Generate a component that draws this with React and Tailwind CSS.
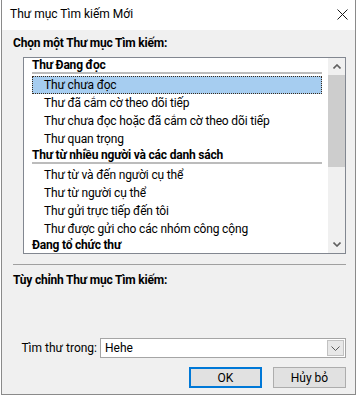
import React from 'react';

const font = { fontFamily: 'Roboto, "Noto Sans", sans-serif' };

function Header({ children }) {
  return (
    <div className="h-[18px] flex flex-col">
      <span className="h-[14px] leading-[14px] font-bold tracking-[-0.2px] text-black whitespace-nowrap">{children}</span>
      <div className="h-[2px] bg-[#bcbcbc]" />
    </div>
  );
}

function Item({ children, selected }) {
  return (
    <div
      className={
        'h-[18px] pl-[11px] leading-[16px] tracking-[-0.15px] whitespace-nowrap text-black ' +
        (selected ? 'bg-[#a6cdf0] border border-dotted border-[#3b2b1b]' : 'border border-transparent')
      }
    >
      {children}
    </div>
  );
}

function ScrollArrow({ up }) {
  return (
    <div className="h-[17px] flex items-center justify-center">
      <svg width="8" height="5" viewBox="0 0 8 5">
        <path
          d={up ? 'M0.5 4.5 L4 1 L7.5 4.5' : 'M0.5 0.5 L4 4 L7.5 0.5'}
          fill="none"
          stroke="#606060"
          strokeWidth="1.6"
        />
      </svg>
    </div>
  );
}

export default function App() {
  return (
    <div className="w-[358px] h-[396px] bg-white overflow-hidden text-[12px] text-black" style={font}>
      <div className="ml-px w-[355px] h-[395px] border-l border-r border-b border-[#8a8a8a] flex flex-col">
        {/* title bar */}
        <div className="h-[30px] bg-white flex items-center justify-between pl-[8px] pr-[7px] pb-[2px]">
          <span className="leading-4">Thư mục Tìm kiếm Mới</span>
          <svg width="11" height="11" viewBox="0 0 11 11" className="mt-[1px]">
            <path d="M0.5 0.5 L10.5 10.5 M10.5 0.5 L0.5 10.5" stroke="#1a1a1a" strokeWidth="1" />
          </svg>
        </div>

        <div className="flex-1 bg-[#f0f0f0] flex flex-col">
          <div className="mt-[5px] ml-[11px] leading-4 font-bold tracking-[-0.2px]">Chọn một Thư mục Tìm kiếm:</div>

          {/* list */}
          <div className="mt-[6px] ml-[21px] w-[323px] h-[197px] border border-[#828790] bg-white flex overflow-hidden">
            <div className="flex-1 pl-[8px] pr-[6px]">
              <Header>Thư Đang đọc</Header>
              <Item selected>Thư chưa đọc</Item>
              <Item>Thư đã cắm cờ theo dõi tiếp</Item>
              <Item>Thư chưa đọc hoặc đã cắm cờ theo dõi tiếp</Item>
              <Item>Thư quan trọng</Item>
              <Header>Thư từ nhiều người và các danh sách</Header>
              <Item>Thư từ và đến người cụ thể</Item>
              <Item>Thư từ người cụ thể</Item>
              <Item>Thư gửi trực tiếp đến tôi</Item>
              <Item>Thư được gửi cho các nhóm công cộng</Item>
              <span className="block h-[14px] leading-[14px] font-bold tracking-[-0.2px] whitespace-nowrap">Đang tổ chức thư</span>
            </div>
            <div className="w-[17px] bg-[#f0f0f0] flex flex-col">
              <ScrollArrow up />
              <div className="h-[92px] bg-[#cdcdcd]" />
              <div className="flex-1" />
              <ScrollArrow />
            </div>
          </div>

          <div className="mt-[10px] ml-[11px] w-[333px] h-px bg-[#a0a0a0]" />

          <div className="mt-[7px] ml-[11px] leading-4 font-bold tracking-[-0.2px]">Tùy chỉnh Thư mục Tìm kiếm:</div>

          {/* look in */}
          <div className="mt-[50px] flex items-center justify-end pr-[9px] h-[20px]">
            <span className="pr-[3px] leading-4 whitespace-nowrap">Tìm thư trong:</span>
            <div className="w-[246px] h-[20px] bg-white border border-[#a5a5a5] flex items-center">
              <span className="flex-1 pl-[4px] leading-4">Hehe</span>
              <div className="w-[17px] h-[16px] mr-px bg-[#e8e8e8] border border-[#c2c2c2] flex items-center justify-center">
                <svg width="9" height="5" viewBox="0 0 9 5">
                  <path d="M0.5 0.5 L4.5 4.5 L8.5 0.5" fill="none" stroke="#5a5a5a" strokeWidth="1" />
                </svg>
              </div>
            </div>
          </div>

          {/* buttons */}
          <div className="mt-[9px] flex justify-end gap-[11px] pr-[9px]">
            <button className="w-[73px] h-[21px] bg-[#e1e1e1] border-2 border-[#0078d7] leading-4 text-[12px]">OK</button>
            <button className="w-[73px] h-[21px] bg-[#e1e1e1] border border-[#adadad] leading-4 text-[12px]">Hủy bỏ</button>
          </div>
        </div>
      </div>
    </div>
  );
}
